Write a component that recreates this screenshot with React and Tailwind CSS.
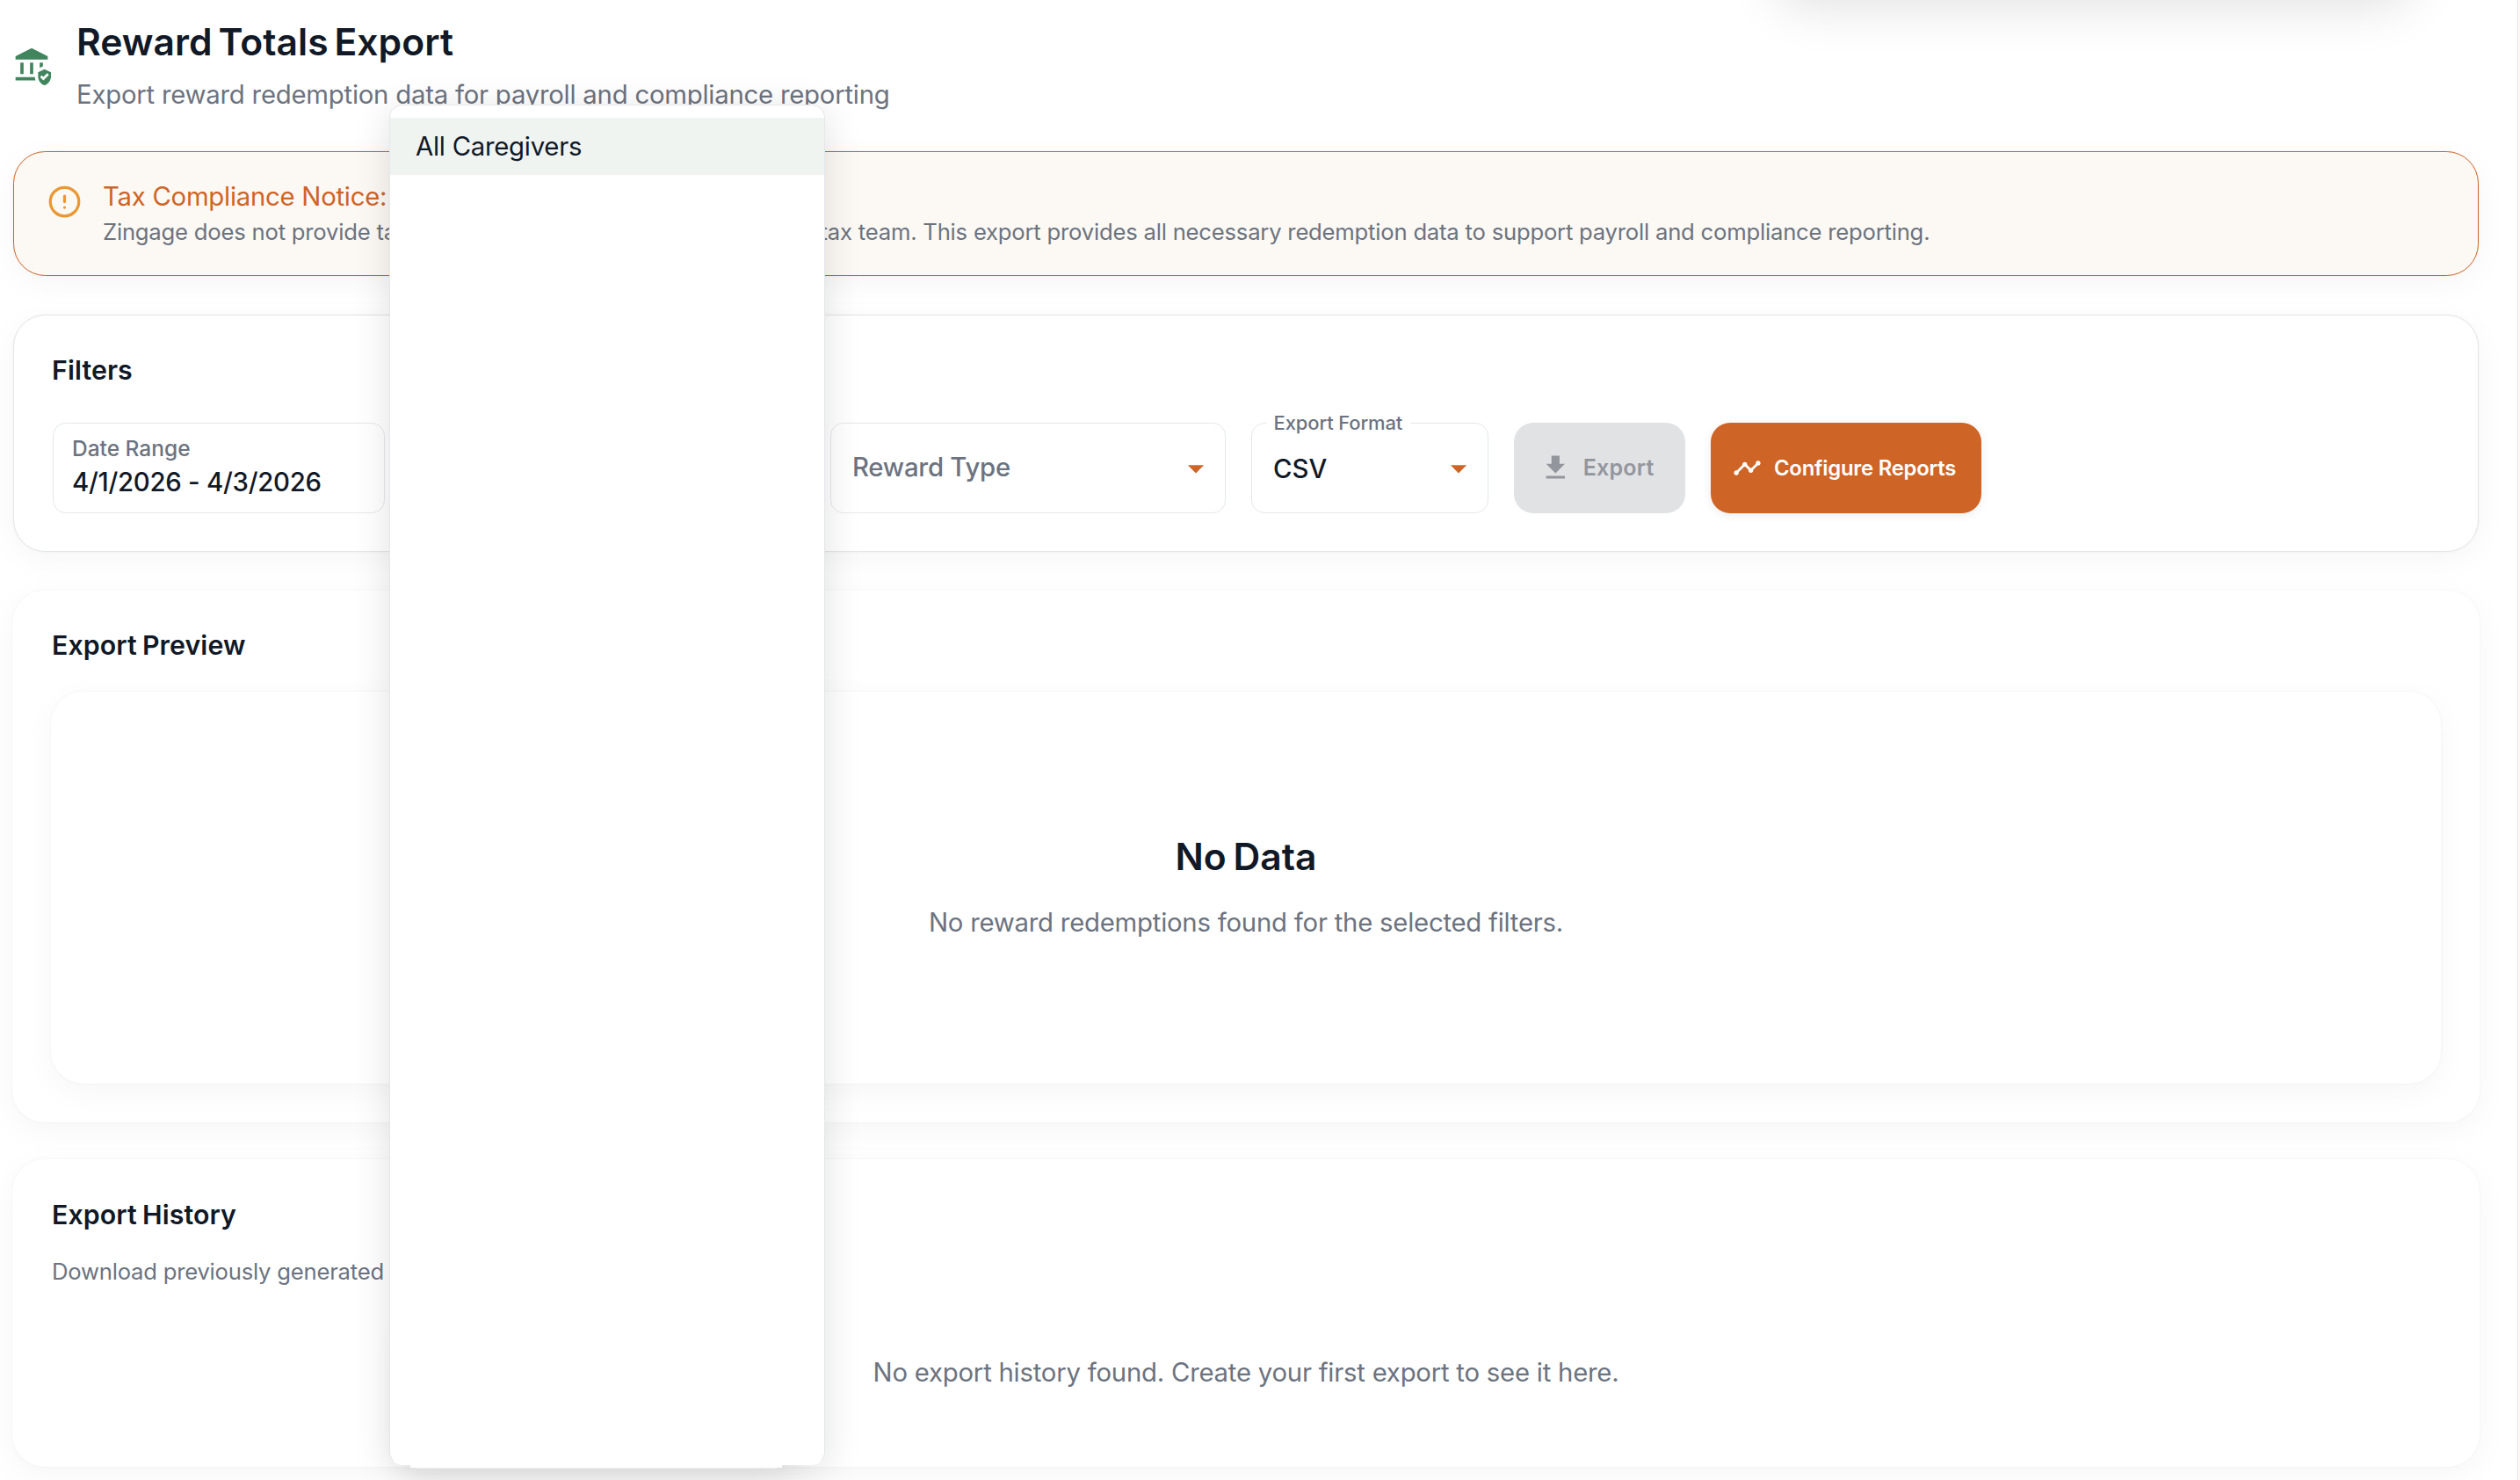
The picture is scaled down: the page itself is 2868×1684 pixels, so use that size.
import { CircleAlert } from "lucide-react";
import { MdArrowDropDown, MdTimeline } from "react-icons/md";

const cardShadow = "shadow-[0_9px_37px_rgba(0,0,0,0.04),0_0_3px_rgba(0,0,0,0.05)]";

function BankShieldIcon() {
    return (
        <svg viewBox="0 0 24 24" className="size-11 shrink-0 fill-[#41855f]">
            <path d="M5 10h2v7H5zM11 10h2v7h-2zM22 6 12 1 2 6v2h20zM2 19v2h12.4c-.21-.64-.32-1.31-.36-2zM19 12.26V10h-2v3.26zM20 14l-4 2v2.55c0 2.52 1.71 4.88 4 5.45 2.29-.57 4-2.93 4-5.45V16zm-.72 7-2.03-2.03 1.06-1.06.97.97 2.41-2.38 1.06 1.06z" />
        </svg>
    );
}

function DownloadIcon() {
    return (
        <svg viewBox="0 0 24 24" className="size-[36.67px] fill-current">
            <path d="M5 20h14v-2H5zM19 9h-4V3H9v6H5l7 7z" />
        </svg>
    );
}

function SectionTitle({ children }) {
    return (
        <h2 className="text-[30.3px] leading-[44px] font-semibold tracking-[0.003em] [word-spacing:-1.5px] whitespace-nowrap">
            {children}
        </h2>
    );
}

function Select({ label, value, className }) {
    return (
        <div
            className={`relative flex h-[103px] shrink-0 items-center justify-between rounded-[14.67px] border border-[#e5e7e9] pr-[11px] pl-[24px] font-medium ${className}`}
        >
            {value ? (
                <>
                    <span className="absolute -top-[15px] left-[16px] bg-white px-[8.5px] text-[22px] leading-7 tracking-[-0.006em] whitespace-nowrap text-[#6c737f]">
                        {label}
                    </span>
                    <span className="pt-[2px] text-[29.33px]">{value}</span>
                </>
            ) : (
                <span className="pb-[2px] text-[29.33px] tracking-[-0.008em] text-[#6c737f]">
                    {label}
                </span>
            )}
            <MdArrowDropDown className="size-11 text-[#cf6427]" />
        </div>
    );
}

function CaregiverMenu() {
    return (
        <>
            <div className="absolute top-[1500px] left-[459px] h-[171px] w-[439px] rounded-[18px] bg-white shadow-[0_9px_37px_rgba(0,0,0,0.07)]" />
            <ul className="absolute top-[119px] left-[443px] h-[1548px] w-[496px] rounded-[15px] border border-[#e5e7eb] border-b-white bg-white pt-[14px] shadow-[0_7px_44px_rgba(0,0,0,0.12)]">
                <li className="flex h-[65px] items-center bg-[#eff4f1] pt-px pl-[29px] text-[29.33px] tracking-[-0.009em]">
                    All Caregivers
                </li>
            </ul>
            {/* covers the seam where the two papers overlap */}
            <div className="absolute top-[1640px] left-[467px] h-[30px] w-[423px] bg-white" />
        </>
    );
}

export default function App() {
    return (
        <main className="relative h-[1684px] w-[2868px] overflow-hidden bg-[#fdf9f5] font-['Inter',sans-serif] text-[#111927]">
            <div className="h-[1684px] w-[2866px] border-r border-[#e3e4e6] bg-white pr-[43px] pl-[14px]">
                <header className="flex h-[172px] pt-[22px]">
                    <div className="pt-[31px]">
                        <BankShieldIcon />
                    </div>
                    <div className="pl-[29px] whitespace-nowrap">
                        <h1 className="text-[42.6px] leading-[51px] font-semibold tracking-[0.001em] [word-spacing:-4px]">
                            Reward Totals Export
                        </h1>
                        <p className="mt-[13px] text-[29.33px] leading-[44px] tracking-[-0.008em] text-[#6c737f]">
                            Export reward redemption data for payroll and compliance reporting
                        </p>
                    </div>
                </header>

                <section
                    className={`ml-px flex h-[142px] w-[2806px] rounded-[36.67px] border border-[#cf6427] bg-[#fcf9f4] pt-[29px] pl-[38px] ${cardShadow}`}
                >
                    <CircleAlert className="mt-[8px] size-[39px] shrink-0 text-[#eb9834]" />
                    <div className="pl-[24px] whitespace-nowrap">
                        <p className="text-[29.33px] leading-[44px] tracking-[-0.009em] text-[#cf6427]">
                            Tax Compliance Notice:
                        </p>
                        <p className="flex text-[25.67px] leading-[36px] tracking-[-0.0085em] text-[#6c737f]">
                            <span className="w-[816.5px] shrink-0">
                                Zingage does not provide tax advice. Please consult your
                            </span>
                            <span>
                                tax team. This export provides all necessary redemption data to support payroll and compliance reporting.
                            </span>
                        </p>
                    </div>
                </section>

                <section
                    className={`mt-11 ml-px h-[270px] w-[2806px] rounded-[36.67px] border border-[#e5e6e8] bg-white px-[44px] pt-[40px] ${cardShadow}`}
                >
                    <div className="-ml-px">
                        <SectionTitle>Filters</SectionTitle>
                    </div>
                    <div className="mt-[38px] flex gap-[29px]">
                        <div className="h-[103px] w-[378px] shrink-0 rounded-[14.67px] border border-[#e5e7e9] pt-[10px] pl-[21px] font-medium">
                            <p className="text-[24.5px] leading-[37px] text-[#6c737f]">Date Range</p>
                            <p className="text-[29.33px] leading-[40px] tracking-[-0.009em]">
                                4/1/2026 - 4/3/2026
                            </p>
                        </div>
                        <Select label="" className="w-[449px]" />
                        <Select label="Reward Type" className="w-[450px]" />
                        <Select label="Export Format" value="CSV" className="w-[270px]" />
                        <button className="flex h-[103px] w-[195px] shrink-0 items-center gap-[13px] rounded-[22px] bg-[#e1e2e4] pl-[29px] text-[25px] font-semibold tracking-[0.01em] text-[#93959d]">
                            <DownloadIcon />
                            Export
                        </button>
                        <button className="flex h-[103px] w-[308px] shrink-0 items-center gap-[14px] rounded-[22px] bg-[#cf6427] pl-[25px] text-[23.83px] font-semibold tracking-[-0.009em] whitespace-nowrap text-white shadow-[0_2px_11px_rgba(0,0,0,0.08)]">
                            <MdTimeline className="size-[33px]" />
                            Configure Reports
                        </button>
                    </div>
                </section>

                <section
                    className={`mt-[43.5px] h-[605px] w-[2808px] rounded-[36.67px] bg-white px-[44px] pt-[40.5px] ${cardShadow}`}
                >
                    <div className="pl-px">
                        <SectionTitle>Export Preview</SectionTitle>
                    </div>
                    <div
                        className={`mt-[31px] flex h-[446px] w-[2720px] flex-col items-center rounded-[36.67px] bg-white pt-[161px] ${cardShadow}`}
                    >
                        <h3 className="text-[42.6px] leading-[53px] font-semibold [word-spacing:-3px]">No Data</h3>
                        <p className="mt-[27px] text-[29.33px] leading-[44px] tracking-[-0.008em] text-[#6c737f]">
                            No reward redemptions found for the selected filters.
                        </p>
                    </div>
                </section>

                <section
                    className={`mt-[42.5px] h-[349.5px] w-[2808px] rounded-[36.67px] bg-white px-[44px] pt-[41px] ${cardShadow}`}
                >
                    <div className="pl-px whitespace-nowrap">
                        <SectionTitle>Export History</SectionTitle>
                        <p className="mt-[24px] text-[25.67px] leading-[37px] tracking-[-0.009em] text-[#6c737f]">
                            Download previously generated exports
                        </p>
                    </div>
                    <p className="mt-[75px] text-center text-[29.33px] leading-[44px] tracking-[-0.008em] text-[#6c737f]">
                        No export history found. Create your first export to see it here.
                    </p>
                </section>
            </div>

            {/* popover parked above the top edge, only its shadow reaches the page */}
            <div className="absolute -top-[104px] left-[2019px] h-[96px] w-[727px] rounded-[37px] bg-white shadow-[0_15px_59px_rgba(0,0,0,0.12)]" />
            <CaregiverMenu />
        </main>
    );
}
